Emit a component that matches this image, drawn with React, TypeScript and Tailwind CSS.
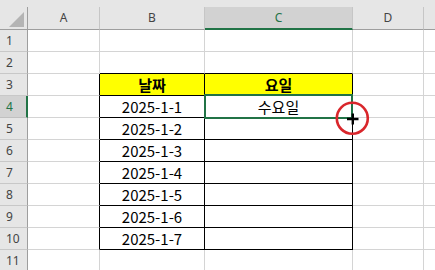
import React from "react";

const dates = ["2025-1-1", "2025-1-2", "2025-1-3", "2025-1-4", "2025-1-5", "2025-1-6", "2025-1-7"];

const cellFont = { fontFamily: '"Noto Sans CJK KR", "Noto Sans", sans-serif' };
const hdrFont = { fontFamily: '"Noto Sans", "Liberation Sans", sans-serif' };

function RowHeader({ n, selected }: { n: number; selected?: boolean }) {
  return (
    <div
      className={
        "w-[28px] h-[22px] shrink-0 box-border border-b flex items-center pl-[6px] text-[12px] leading-none " +
        (selected
          ? "bg-[#d2d2d2] border-b-[#c0c0c0] border-r-2 border-r-[#217346] text-[#217346]"
          : "bg-[#e6e6e6] border-b-[#c8c8c8] border-r border-r-[#9e9e9e] text-[#444444]")
      }
      style={hdrFont}
    >
      {n}
    </div>
  );
}

function Cell({
  w,
  right = "border-r-[#d4d4d4]",
  bottom = "border-b-[#d4d4d4]",
  bg = "",
  children,
  bold,
}: {
  w: string;
  right?: string;
  bottom?: string;
  bg?: string;
  children?: React.ReactNode;
  bold?: boolean;
}) {
  return (
    <div
      className={`${w} h-[22px] shrink-0 box-border border-r border-b ${right} ${bottom} ${bg} flex items-center justify-center text-[15px] leading-none text-black ${bold ? "font-bold" : ""}`}
      style={cellFont}
    >
      {children}
    </div>
  );
}

export default function App() {
  const rows = Array.from({ length: 11 }, (_, i) => i + 1);
  return (
    <div className="relative w-[435px] h-[270px] overflow-hidden bg-white">
      <div className="h-[7px] bg-[#e6e6e6]" />
      <div className="flex h-[23px] bg-[#e6e6e6] text-[12px] text-[#444444] leading-none" style={hdrFont}>
        <div className="w-[28px] h-[23px] shrink-0 box-border border-r border-b border-[#9e9e9e] flex items-end justify-end pr-[3px] pb-[2px]">
          <svg width="15" height="15" viewBox="0 0 15 15">
            <polygon points="15,0 15,15 0,15" fill="#b4b4b4" />
          </svg>
        </div>
        <div className="w-[72px] h-[23px] shrink-0 box-border border-r border-r-[#c6c6c6] border-b border-b-[#9e9e9e] flex items-center justify-center">A</div>
        <div className="w-[105px] h-[23px] shrink-0 box-border border-r border-r-[#c6c6c6] border-b border-b-[#9e9e9e] flex items-center justify-center">B</div>
        <div className="w-[148px] h-[23px] shrink-0 box-border border-r border-r-[#c6c6c6] border-b-2 border-b-[#217346] bg-[#d2d2d2] text-[#217346] flex items-center justify-center pt-[1px]">C</div>
        <div className="w-[71px] h-[23px] shrink-0 box-border border-r border-r-[#c6c6c6] border-b border-b-[#9e9e9e] flex items-center justify-center">D</div>
        <div className="flex-1 h-[23px] box-border border-b border-b-[#9e9e9e]" />
      </div>
      {rows.map((n) => {
        const inTable = n >= 3 && n <= 10;
        const black = "border-r-black";
        const blackB = "border-b-black";
        return (
          <div key={n} className="flex h-[22px]">
            <RowHeader n={n} selected={n === 4} />
            <Cell w="w-[72px]" right={inTable ? black : "border-r-[#d4d4d4]"} />
            <Cell
              w="w-[105px]"
              right={inTable ? black : "border-r-[#d4d4d4]"}
              bottom={inTable || n === 2 ? blackB : "border-b-[#d4d4d4]"}
              bg={n === 3 ? "bg-[#ffff00]" : ""}
              bold={n === 3}
            >
              {n === 3 ? "날짜" : inTable ? dates[n - 4] : null}
            </Cell>
            <Cell
              w="w-[148px]"
              right={inTable ? black : "border-r-[#d4d4d4]"}
              bottom={inTable || n === 2 ? blackB : "border-b-[#d4d4d4]"}
              bg={n === 3 ? "bg-[#ffff00]" : ""}
              bold={n === 3}
            >
              {n === 3 ? "요일" : n === 4 ? "수요일" : null}
            </Cell>
            <Cell w="w-[71px]" />
            <div className="flex-1 h-[22px] box-border border-b border-b-[#d4d4d4]" />
          </div>
        );
      })}
      {/* selection box */}
      <div className="absolute left-[204px] top-[94px] w-[149px] h-[25px] border-2 border-[#217346] pointer-events-none" />
      {/* cursor + red circle */}
      <svg className="absolute left-[334px] top-[100px]" width="37" height="37" viewBox="0 0 37 37">
        <circle cx="18.3" cy="18.3" r="15.5" fill="none" stroke="#d9262b" strokeWidth="2.6" />
        <path d="M13 19h11.5M18.8 13.5v11" stroke="#000000" strokeWidth="2.4" />
      </svg>
    </div>
  );
}
